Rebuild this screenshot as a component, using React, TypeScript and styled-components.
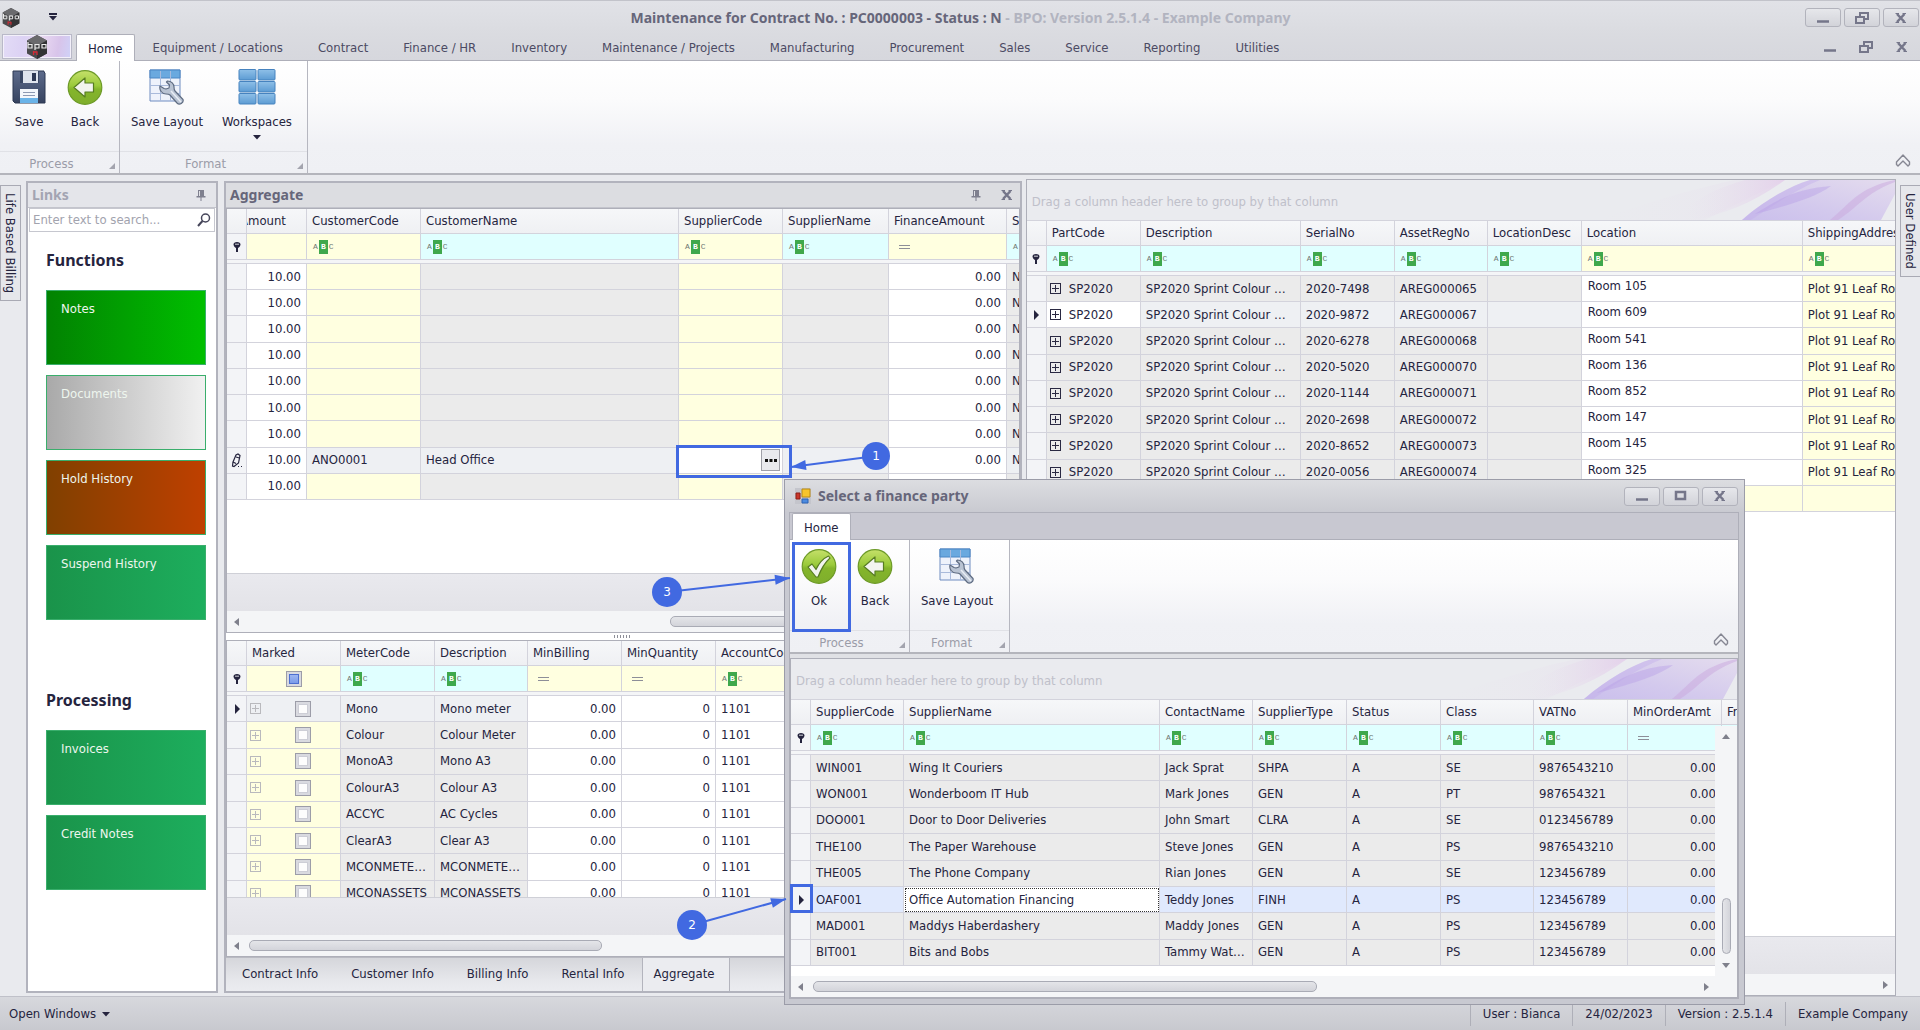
import React from "react";
import styled, { createGlobalStyle, css } from "styled-components";

const INK = "#25243e";
const LINE = "#d3d3dc";
const FRAME = "#aeafb9";
const MARK = "#4169e1";
const HEADING = '"Noto Sans", "DejaVu Sans", sans-serif';

const Global = createGlobalStyle`
  * { box-sizing: border-box; }
  body {
    margin: 0;
    color: ${INK};
    font: 13px/20px "DejaVu Sans Condensed", "DejaVu Sans", "Noto Sans", sans-serif;
  }
  button, input { font: inherit; color: inherit; margin: 0; }
  button { border: 0; padding: 0; background: none; cursor: pointer; }
  svg { display: block; flex: none; }
`;

/* ---------- shell ---------- */

const Page = styled.div`
  position: relative;
  display: flex;
  flex-direction: column;
  min-height: 100vh;
  overflow: hidden;
  background: #e9eaee;
`;

const TitleBar = styled.header`
  display: grid;
  grid-template-columns: 120px 1fr 120px;
  align-items: center;
  height: 34px;
  padding-left: 1px;
  border-top: 1px solid #c2c3ca;
  background: linear-gradient(#e1e2e7, #dadbe0);
`;

const TitleLeft = styled.div`
  display: flex;
  align-items: center;
  gap: 27px;
`;

const TitleText = styled.h1`
  margin: 0;
  font: bold 14px/20px ${HEADING};
  text-align: center;
  color: #66667a;
`;

const Faded = styled.span`
  color: #b2b4c0;
`;

const WindowButtons = styled.div`
  display: flex;
  justify-content: flex-end;
  gap: 3px;
  padding-right: 1px;
`;

const WindowButton = styled.button<{ $flat?: boolean }>`
  display: grid;
  place-items: center;
  width: 36px;
  height: 19px;
  border: 1px solid ${(p) => (p.$flat ? "transparent" : "#b2b3bc")};
  border-radius: 3px;
  background: ${(p) => (p.$flat ? "none" : "linear-gradient(#e6e7eb, #d2d3d9)")};
`;

const MenuRow = styled.nav<{ $inner?: boolean }>`
  display: flex;
  align-items: stretch;
  height: 27px;
  padding-left: 2px;
  border-bottom: 1px solid ${FRAME};
  background: ${(p) => (p.$inner ? "#c8c8d1" : "linear-gradient(#dadbe0, #d6d7dd)")};
`;

const AppButton = styled.button`
  display: grid;
  place-items: center;
  width: 70px;
  height: 25px;
  margin-right: 4px;
  border: 1px solid #b9b9c8;
  box-shadow: inset 0 0 0 1px #f3f0fa;
  background: linear-gradient(100deg, #e3dcf6 0%, #dcd2f4 30%, #e9d9f2 55%, #d8c4ea 80%, #cfd2f8 100%);
`;

const MenuTab = styled.button<{ $active?: boolean }>`
  padding: 2px 17px 0 18px;
  white-space: nowrap;
  color: #4b4a63;
  ${(p) =>
    p.$active &&
    css`
      height: 27px;
      padding: 2px 11px 0;
      color: ${INK};
      background: #fff;
      border: 1px solid ${FRAME};
      border-bottom: 0;
      border-radius: 2px 2px 0 0;
    `}
`;

const MdiButtons = styled.div`
  display: flex;
  align-items: center;
  margin-left: auto;
`;

/* ---------- ribbon ---------- */

const RibbonBar = styled.div`
  display: flex;
  height: 114px;
  border-bottom: 2px solid #b4b5bc;
  background: linear-gradient(#fff, #fbfbfc 35%, #f0f1f5 75%, #eff0f4);
`;

const RibbonGroup = styled.section`
  display: flex;
  flex-direction: column;
  border-right: 1px solid #b6b7c0;
`;

const RibbonItems = styled.div`
  display: flex;
  flex: 1;
  padding: 0 6px 0 1px;
`;

const RibbonButton = styled.button<{ $width: number }>`
  display: flex;
  flex-direction: column;
  align-items: center;
  width: ${(p) => p.$width}px;
  padding-top: 8px;
  white-space: nowrap;
`;

const RibbonLabel = styled.span`
  margin-top: 7px;
`;

const RibbonCaption = styled.div`
  display: flex;
  justify-content: center;
  position: relative;
  height: 22px;
  padding: 2px 16px 0 0;
  border-top: 1px solid #e0e1e6;
  color: #9b9ca8;

  &::after {
    content: "";
    position: absolute;
    right: 4px;
    bottom: 4px;
    border: 3px solid transparent;
    border-right-color: #a3a4ae;
    border-bottom-color: #a3a4ae;
  }
`;

const CollapseButton = styled.button`
  align-self: flex-end;
  margin: 0 9px 6px auto;
`;

/* ---------- workspace ---------- */

const Workspace = styled.main`
  display: grid;
  flex: 1;
  grid-template-columns: 22px 194px minmax(0, 11fr) minmax(0, 12fr) 20px;
  column-gap: 4px;
  padding-top: 4px;
`;

const Rail = styled.aside`
  display: flex;
  align-items: flex-start;
  padding-top: 6px;
`;

const RailTab = styled.button`
  width: 21px;
  padding: 7px 0;
  border: 1px solid #a9aab4;
  background: #e6e7eb;
  writing-mode: vertical-rl;
  white-space: nowrap;
  line-height: 19px;
`;

const Panel = styled.section<{ $narrow?: boolean }>`
  display: flex;
  flex-direction: column;
  margin: 2px ${(p) => (p.$narrow ? "2px" : "0")} 3px 0;
  border: 2px solid #b2b3bd;
  background: #fff;
  min-width: 0;
`;

const PanelTitle = styled.h2<{ $dim?: boolean }>`
  display: flex;
  align-items: center;
  gap: 18px;
  height: 25px;
  margin: 0;
  padding: 0 ${(p) => (p.$dim ? "10px" : "5px")} 0 4px;
  border-bottom: 1px solid #c3c4cc;
  background: ${(p) => (p.$dim ? "#e4e5ea" : "#dcdde1")};
  color: ${(p) => (p.$dim ? "#a3a4b2" : "#66667a")};
  font: bold 14px/20px ${HEADING};
`;

const PanelName = styled.span`
  flex: 1;
`;

const SearchBox = styled.label`
  display: flex;
  align-items: center;
  height: 24px;
  margin: 0 1px;
  padding: 0 3px;
  border: 1px solid #c6c7cf;
`;

const SearchInput = styled.input`
  flex: 1;
  min-width: 0;
  padding: 0;
  border: 0;
  outline: 0;
  background: none;
  &::placeholder { color: #a2a3ae; opacity: 1; }
`;

const LinkGroup = styled.div`
  display: flex;
  flex-direction: column;
  gap: 10px;
  padding: 18px 10px 52px 18px;
`;

const LinkHeading = styled.h3`
  margin: 0 0 10px;
  font: bold 16px/20px ${HEADING};
`;

const GREEN = "linear-gradient(90deg, #1a934a, #1dae5d)";

const Tile = styled.button<{ $fill?: string }>`
  display: flex;
  height: 75px;
  padding: 8px 14px;
  border: 1px solid #3aae6c;
  background: ${(p) => p.$fill || GREEN};
  color: #eef6ee;
`;

/* ---------- data grid ---------- */

const GridBox = styled.div<{ $fixed?: number }>`
  position: relative;
  display: flex;
  flex-direction: column;
  flex: ${(p) => (p.$fixed ? "none" : "1")};
  height: ${(p) => (p.$fixed ? p.$fixed + "px" : "auto")};
  min-width: 0;
  border: 1px solid ${FRAME};
  background: #fff;
`;

const GroupBar = styled.div`
  display: flex;
  justify-content: space-between;
  height: 41px;
  padding-left: 5px;
  overflow: hidden;
  background: #eaebef;
  border-bottom: 1px solid ${LINE};
  color: #bfc0ca;
  line-height: 43px;
  white-space: nowrap;
`;

const TableClip = styled.div`
  flex: 1 1 0;
  min-height: 0;
  overflow: hidden;
`;

const Table = styled.table<{ $height: number }>`
  height: ${(p) => p.$height}px;
  width: 0;
  table-layout: fixed;
  border-collapse: separate;
  border-spacing: 0;
`;

const HeadCell = styled.th<{ $scrolled?: boolean }>`
  height: 25px;
  padding: 0 5px;
  border: solid ${LINE};
  border-width: 0 1px 1px 0;
  background: linear-gradient(#f6f7f9, #eff0f3);
  font-weight: normal;
  text-align: left;
  text-indent: ${(p) => (p.$scrolled ? "-12px" : "0")};
  white-space: nowrap;
  overflow: hidden;
`;

const FilterCell = styled.td<{ $bg: string }>`
  height: 26px;
  padding: 0 5px;
  border: solid ${LINE};
  border-width: 0 1px 1px 0;
  background: ${(p) => p.$bg};
  overflow: hidden;
`;

const GapCell = styled.td`
  height: 4px;
  padding: 0;
  border-bottom: 1px solid ${LINE};
  background: #f4f5f7;
`;

const Cell = styled.td<{ $bg: string; $right?: boolean; $raised?: boolean; $focus?: boolean; $tight?: boolean }>`
  height: 26px;
  padding: ${(p) => (p.$tight ? "0" : "0 5px")};
  border: solid ${LINE};
  border-width: 0 1px 1px 0;
  background: ${(p) => p.$bg};
  text-align: ${(p) => (p.$right ? "right" : "left")};
  white-space: nowrap;
  overflow: hidden;
  text-overflow: ellipsis;
  ${(p) => p.$raised && css`padding: 0 6px 5px;`}
  ${(p) => p.$focus && css`outline: 1px dotted #333; outline-offset: -2px;`}
`;

const Indicator = styled.td`
  padding: 0;
  border: solid ${LINE};
  border-width: 0 1px 1px 0;
  background: #f3f4f7;
  svg { margin: 0 auto; }
`;

const AbcButton = styled.button`
  display: flex;
  align-items: center;
  gap: 1px;
  margin-left: 1px;
  font: 8px/14px "Liberation Mono", monospace;
  color: #6f7773;
`;

const AbcCore = styled.span`
  width: 9px;
  height: 14px;
  background: #3fa84c;
  color: #fff;
  font-weight: bold;
  text-align: center;
`;

const EqualsButton = styled.button`
  display: block;
  width: 11px;
  height: 4px;
  margin-left: 5px;
  border: solid #8d8e98;
  border-width: 1px 0;
`;

const Inline = styled.span`
  display: flex;
  align-items: center;
  gap: 8px;
  padding-left: 3px;
`;

const ExpandButton = styled.button<{ $dim?: boolean }>`
  width: 11px;
  height: 11px;
  border: 1px solid ${(p) => (p.$dim ? "#b9b9bd" : "#2a2942")};
  background:
    linear-gradient(currentColor, currentColor) center / 7px 1px no-repeat,
    linear-gradient(currentColor, currentColor) center / 1px 7px no-repeat;
  color: ${(p) => (p.$dim ? "#b9b9bd" : "#2a2942")};
`;

const MarkedCell = styled.span`
  display: flex;
  align-items: center;
  gap: 34px;
  padding-left: 3px;
`;

const Tick = styled.input<{ $mixed?: boolean }>`
  appearance: none;
  display: block;
  width: 16px;
  height: 16px;
  border: 1px solid #9c9da8;
  background: ${(p) => (p.$mixed ? "linear-gradient(#a9c0f4, #6f92e6)" : "#fdfdfd")};
  box-shadow: inset 0 0 0 2px #d9dae0, inset 0 0 0 3px ${(p) => (p.$mixed ? "#4c6fd0" : "#cdced6")};
`;

const TickCenter = styled.div`
  padding-left: 34px;
`;

const Editor = styled.span`
  display: flex;
  align-items: center;
  height: 24px;
  padding-right: 2px;
`;

const EditorInput = styled.input`
  flex: 1;
  min-width: 0;
  padding: 0 4px;
  border: 0;
  outline: 0;
  background: #fff;
`;

const EditorButton = styled.button`
  display: grid;
  place-items: center;
  width: 19px;
  height: 22px;
  border: 1px solid #9fa0a8;
  background: #e9eaee;
`;

const FooterBand = styled.div`
  height: 38px;
  border-top: 1px solid #cfd0d7;
  background: linear-gradient(#e9e9ee, #e3e3e8);
`;

const ScrollRow = styled.div<{ $corner?: boolean }>`
  display: flex;
  align-items: center;
  height: 21px;
  padding: 0 ${(p) => (p.$corner ? "27px" : "6px")} 0 6px;
  gap: 8px;
  background: #f4f5f7;
`;

const Track = styled.div<{ $start: number; $size: number }>`
  flex: 1;
  padding-left: ${(p) => p.$start}%;
  &::before {
    content: "";
    display: block;
    width: ${(p) => p.$size}%;
    height: 9px;
    border: 1px solid #a9abb5;
    border-radius: 5px;
    background: linear-gradient(#e4e5e9, #d3d4da);
  }
`;

const ScrollColumn = styled.div`
  position: absolute;
  top: 67px;
  right: 0;
  bottom: 21px;
  display: flex;
  flex-direction: column;
  align-items: center;
  width: 22px;
  padding: 7px 0;
  background: #f4f5f7;
`;

const ThumbDown = styled.div`
  width: 9px;
  height: 56px;
  margin: auto 0 7px;
  border: 1px solid #a9abb5;
  border-radius: 5px;
  background: linear-gradient(90deg, #e4e5e9, #d3d4da);
`;

const Splitter = styled.div`
  display: grid;
  place-items: center;
  height: 7px;
  &::before {
    content: "";
    width: 17px;
    height: 3px;
    background: repeating-linear-gradient(90deg, #8d8e98 0 1px, transparent 1px 3px);
  }
`;

const DockTabs = styled.div`
  display: flex;
  align-items: stretch;
  height: 34px;
  border-top: 1px solid #b9bac2;
  background: linear-gradient(#d5d6db, #e7e8ec 70%, #ebecf0);
`;

const DockTab = styled.button<{ $active?: boolean }>`
  padding: 0 17px 2px 16px;
  ${(p) =>
    p.$active &&
    css`
      padding: 0 15px 2px 11px;
      border: solid #b3b4bd;
      border-width: 0 1px;
      background: #ebecf0;
    `}
`;

/* ---------- status bar ---------- */

const StatusBar = styled.footer`
  display: flex;
  align-items: center;
  height: 34px;
  padding-left: 9px;
  border-top: 1px solid #c0c1c9;
  background: linear-gradient(#d7d8dd, #c8c9cf);
`;

const OpenWindows = styled.button`
  display: flex;
  align-items: center;
  gap: 5px;
  margin-right: auto;
`;

const StatusItem = styled.span`
  padding: 2px 12px;
  border-left: 1px solid #aeafb8;
`;

/* ---------- dialog ---------- */

const Dialog = styled.section`
  position: absolute;
  left: 784px;
  top: 479px;
  display: flex;
  flex-direction: column;
  width: 961px;
  padding: 0 5px 5px 4px;
  border: 1px solid #9b9ca8;
  background: #c8c9d1;
`;

const DialogTitle = styled.div`
  display: flex;
  align-items: center;
  gap: 7px;
  height: 32px;
  margin: 0 -5px 0 -4px;
  padding: 0 5px 0 10px;
  background: linear-gradient(#dcdde1, #c9cad1);
`;

const DialogName = styled.h2`
  flex: 1;
  margin: 0;
  font: bold 14px/20px ${HEADING};
  color: #66667a;
`;

const DialogBody = styled.div`
  display: flex;
  flex-direction: column;
  border: 1px solid ${FRAME};
  background: #e0e1e5;
`;

const DialogGrid = styled.div`
  display: flex;
  height: 344px;
  padding-top: 4px;
`;

/* ---------- annotations ---------- */

const Notes = styled.svg`
  position: absolute;
  left: 0;
  top: 0;
  pointer-events: none;
`;

/* ---------- drawings ---------- */

const Logo = ({ size }: { size: number }) => (
  <svg width={size} height={size} viewBox="0 0 24 24">
    <path d="M12 0 22 5.5v13L12 24 2 18.5v-13z" fill="#4a4a4c" />
    <path d="M12 0 22 5.5 12 11 2 5.5z" fill="#6a6a6d" />
    <path d="M12 11v13l10-5.5v-13z" fill="#333335" />
    <path d="M3 7v6h4V9.500H3M10 15V9.500h4V13h-4M17 9.500h4V13h-4z" fill="none" stroke="#ececec" strokeWidth="1.2" />
    <path d="M8.500 16v4M9 17h3v3" fill="none" stroke="#d42a35" strokeWidth="1.3" />
  </svg>
);

const Caret = ({ bar }: { bar?: boolean }) => (
  <svg width="10" height="9" viewBox="0 0 10 9">
    {bar && <path d="M1 0h8v2H1z" fill={INK} />}
    <path d="M1 3h8L5 7.5z" fill={INK} />
  </svg>
);

const ArrowGlyph = ({ dir }: { dir: "left" | "right" | "up" | "down" }) => {
  const d = { left: "M6 0v8L1 4z", right: "M2 0v8l5-4z", up: "M0 6h8L4 1z", down: "M0 2h8L4 7z" }[dir];
  return (
    <svg width="8" height="8" viewBox="0 0 8 8">
      <path d={d} fill="#7f808c" />
    </svg>
  );
};

const WinGlyph = ({ kind }: { kind: "min" | "restore" | "max" | "close" }) => (
  <svg width="16" height="14" viewBox="0 0 16 14" fill="none" stroke="#75768a" strokeWidth="2">
    {kind === "min" && <path d="M2 10.5h12" strokeWidth="2.5" />}
    {kind === "restore" && (
      <>
        <path d="M6 5V2h8v6h-3" />
        <path d="M2 6h8v6H2z" />
      </>
    )}
    {kind === "max" && <path d="M3 3h9v7H3z" strokeWidth="2.5" />}
    {kind === "close" && (
      <>
        <path d="M4 3l7.500 8M11.500 3 4 11" strokeWidth="2.5" />
        <path d="M2.500 2.500h3.500M9.500 2.500H13M2.500 11.500h3.500M9.500 11.500H13" strokeWidth="1" />
      </>
    )}
  </svg>
);

const PinGlyph = () => (
  <svg width="10" height="12" viewBox="0 0 10 12">
    <path d="M2 1h6v6h1.500v1.500h-4V12h-1V8.500H.5V7H2z" fill="#7f808f" />
    <path d="M3.500 2v5" stroke="#e0e1e6" />
  </svg>
);

const CollapseGlyph = () => (
  <svg width="16" height="13" viewBox="0 0 16 13" fill="none" stroke="#868793" strokeWidth="1.4">
    <path d="M8 1 1.500 8v2.500L3 12l5-5 5 5 1.500-1.500V8z" strokeLinejoin="round" />
  </svg>
);

const FilterPin = () => (
  <svg width="10" height="12" viewBox="0 0 10 12">
    <path d="M5 1c2.200 0 3.500 1 3.500 2.500S7 6.500 6 7v4H4V7C3 6.500 1.500 5 1.500 3.500S2.800 1 5 1z" fill={INK} />
    <path d="M3 3.200h4" stroke="#fff" strokeWidth=".8" />
  </svg>
);

const RowMarker = () => (
  <svg width="6" height="10" viewBox="0 0 6 10">
    <path d="M1 0v10l5-5z" fill={INK} />
  </svg>
);

const PencilGlyph = () => (
  <svg width="12" height="15" viewBox="0 0 12 15" fill="none" stroke={INK} strokeWidth="1.2">
    <path d="M2 9 5 2l2-1 2 1.500L7.500 10 3 13.500l-1.500-.5z" />
    <path d="M5 4l3.500 1M2 9l3 1.500" />
    <path d="M7 13.500h1M10 13.500h1" />
  </svg>
);

const SearchGlyph = () => (
  <svg width="14" height="14" viewBox="0 0 14 14" fill="none" stroke="#46465a" strokeWidth="1.5">
    <circle cx="8.5" cy="5" r="4" />
    <path d="M5.500 8 1 13" strokeWidth="2" />
  </svg>
);

const DotsGlyph = () => (
  <svg width="12" height="3" viewBox="0 0 12 3" fill="#111">
    <path d="M0 0h3v3H0zM4.500 0h3v3h-3zM9 0h3v3H9z" />
  </svg>
);

const SaveIcon = () => (
  <svg width="36" height="36" viewBox="0 0 36 36">
    <defs>
      <linearGradient id="floppy" x2="0" y2="1">
        <stop offset="0" stopColor="#5d6b8c" />
        <stop offset="1" stopColor="#36435f" />
      </linearGradient>
    </defs>
    <path d="M2 2h31v1l1 1v30H4l-2-2z" fill="url(#floppy)" stroke="#2d3853" />
    <path d="M9 2h19v12H9z" fill="#3a4764" />
    <path d="M12 2h15v12H12z" fill="#dfe4ed" />
    <path d="M21 4h4v8h-4z" fill="#2d3853" />
    <path d="M9 20h18v14H9z" fill="#f3f6fb" />
    <path d="M9 29h18v5H9z" fill="#6ab3e8" />
    <path d="M12 23.500h12M12 26.500h12" stroke="#8d99b3" />
  </svg>
);

const RoundIcon = ({ kind }: { kind: "back" | "ok" }) => (
  <svg width="36" height="36" viewBox="0 0 36 36">
    <defs>
      <linearGradient id={"disc-" + kind} x2="0" y2="1">
        <stop offset="0" stopColor="#c5e06a" />
        <stop offset=".45" stopColor="#9aca3a" />
        <stop offset=".55" stopColor="#84b52b" />
        <stop offset="1" stopColor="#7fae2c" />
      </linearGradient>
    </defs>
    <circle cx="18" cy="18.5" r="16.8" fill={`url(#disc-${kind})`} stroke="#6d9a28" strokeWidth="1.2" />
    <path
      d={kind === "back" ? "M7 18.500 18 9v5h8.500v9H18v5z" : "M7 19l4-3 4 5.500C18 15 22 10.500 27.500 8l1.500 2c-5 4.500-8.500 10-12 19h-2z"}
      fill="#f2f4ee"
      stroke="#577c22"
      strokeWidth="1.2"
      strokeLinejoin="round"
    />
  </svg>
);

const LayoutIcon = () => (
  <svg width="38" height="36" viewBox="0 0 38 36">
    <path d="M2 1h30v31H2z" fill="#eef2fb" stroke="#6f8cc0" />
    <path d="M2 1h30v8H2z" fill="#6aa9df" stroke="#4a86c4" />
    <path d="M2 16.500h30M2 24.500h30M12.500 2v30M22.500 2v30" stroke="#a9badb" fill="none" />
    <path
      d="M12 17c-1 4 2 8 6 8 2 0 3 0 4 1l7 8c2.500 2.500 7 0 6-3.500L27 22c-1-1-1-2-1-4 0-3-2.500-6-6.500-6l-1 1 3 3-.5 3-3 1-2-.5z"
      fill="#b9c3d3"
      stroke="#5f6c82"
      strokeWidth="1.2"
      strokeLinejoin="round"
    />
    <path d="M23 22 33 33" stroke="#e8edf4" strokeWidth="1.5" />
  </svg>
);

const WorkspacesIcon = () => (
  <svg width="38" height="36" viewBox="0 0 38 36">
    <defs>
      <linearGradient id="pane" x2="0" y2="1">
        <stop offset="0" stopColor="#8fc0e8" />
        <stop offset="1" stopColor="#5c9bd3" />
      </linearGradient>
    </defs>
    {[0, 12, 24].map((y) =>
      [1, 20].map((x) => (
        <rect key={x + "-" + y} x={x} y={y + 0.5} width="17" height="10.5" rx="1" fill="url(#pane)" stroke="#4683bf" />
      ))
    )}
  </svg>
);

const FormIcon = () => (
  <svg width="16" height="16" viewBox="0 0 16 16">
    <path d="M0 0h16v16H0z" fill="#c4c5cc" />
    <path d="M7 1h8v8H7z" fill="#f7c42c" stroke="#b98a14" />
    <path d="M1 5h4v6H1z" fill="#c9372b" stroke="#8e1f17" />
    <path d="M7 11h6v4H7z" fill="#4d8be0" stroke="#2d62b4" />
  </svg>
);

const Ribbons = ({ id }: { id: string }) => (
  <svg width="300" height="40" viewBox="0 0 300 40">
    <defs>
      <linearGradient id={id + "a"}>
        <stop offset="0" stopColor="#e9e4ee" stopOpacity="0" />
        <stop offset="1" stopColor="#e3cdea" />
      </linearGradient>
      <linearGradient id={id + "b"} y1="1" x2="1" y2="0">
        <stop offset="0" stopColor="#cabfec" />
        <stop offset=".4" stopColor="#d3c9ed" />
        <stop offset="1" stopColor="#e4dcee" />
      </linearGradient>
    </defs>
    <path d="M0 40C60 20 110 6 140 0h50L110 40z" fill={`url(#${id}a)`} opacity=".25" />
    <path d="M90 30C110 12 130 6 150 0h40C160 22 130 34 100 40z" fill={`url(#${id}a)`} opacity=".8" />
    <path d="M147 40C170 20 195 6 215 0h85v14L286 40z" fill={`url(#${id}b)`} />
    <path d="M147 40C170 20 195 6 215 0h10C200 10 180 24 156 40z" fill="#c3b0ea" opacity=".45" />
    <path d="M160 34C190 14 210 8 236 6 220 18 190 26 160 34z" fill="#b9a0e6" opacity=".45" />
    <path d="M235 40C255 24 262 8 300 0v2C272 12 262 28 243 40z" fill="#c9a8dd" opacity=".5" />
  </svg>
);

/* ---------- grid component ---------- */

const GREY = "#ebebeb";
const YELLOW = "#ffffe0";
const CYAN = "#e0ffff";
const WHITE = "#ffffff";
const ROW_FOCUS = "#eef0f3";
const ROW_SELECTED = "#e0e9fd";

type FilterKind = "abc" | "eq" | "check" | "none";

interface Column {
  title: string;
  width: number;
  filter: FilterKind;
  filterBg: string;
  bg: string;
  right?: boolean;
  raised?: boolean;
}

interface GridProps {
  label: string;
  columns: Column[];
  rows: React.ReactNode[][];
  height: number;
  scrolled?: boolean;
  marks?: Record<number, "current" | "edit">;
  cellBg?: (row: number, col: number) => string | undefined;
  focusCell?: [number, number];
}

const Abc = () => (
  <AbcButton aria-label="Contains filter">
    <span>A</span>
    <AbcCore>B</AbcCore>
    <span>C</span>
  </AbcButton>
);

function FilterControl({ kind }: { kind: FilterKind }) {
  if (kind === "abc") return <Abc />;
  if (kind === "eq") return <EqualsButton aria-label="Equals filter" />;
  if (kind === "check")
    return (
      <TickCenter>
        <Tick type="checkbox" $mixed aria-label="Marked filter" />
      </TickCenter>
    );
  return null;
}

function DataTable({ label, columns, rows, height, scrolled, marks = {}, cellBg, focusCell }: GridProps) {
  return (
    <TableClip>
      <Table $height={height} aria-label={label}>
        <colgroup>
          <col width={20} />
          {columns.map((c) => (
            <col key={c.title} width={c.width} />
          ))}
        </colgroup>
        <thead>
          <tr>
            <HeadCell />
            {columns.map((c, i) => (
              <HeadCell key={c.title} $scrolled={scrolled && i === 0}>
                {c.title}
              </HeadCell>
            ))}
          </tr>
          <tr>
            <Indicator>
              <FilterPin />
            </Indicator>
            {columns.map((c) => (
              <FilterCell key={c.title} $bg={c.filterBg}>
                <FilterControl kind={c.filter} />
              </FilterCell>
            ))}
          </tr>
          <tr>
            <GapCell colSpan={columns.length + 1} />
          </tr>
        </thead>
        <tbody>
          {rows.map((row, r) => (
            <tr key={r}>
              <Indicator>
                {marks[r] === "current" && <RowMarker />}
                {marks[r] === "edit" && <PencilGlyph />}
              </Indicator>
              {columns.map((c, i) => (
                <Cell
                  key={c.title}
                  $bg={cellBg?.(r, i) ?? c.bg}
                  $right={c.right}
                  $raised={c.raised}
                  $tight={typeof row[i] === "object"}
                  $focus={!!focusCell && focusCell[0] === r && focusCell[1] === i}
                >
                  {row[i]}
                </Cell>
              ))}
            </tr>
          ))}
        </tbody>
      </Table>
    </TableClip>
  );
}

function HScroll({ start, size, corner }: { start: number; size: number; corner?: boolean }) {
  return (
    <ScrollRow $corner={corner}>
      <ArrowGlyph dir="left" />
      <Track $start={start} $size={size} />
      <ArrowGlyph dir="right" />
    </ScrollRow>
  );
}

/* ---------- data ---------- */

const col = (
  title: string,
  width: number,
  bg = GREY,
  filterBg = CYAN,
  filter: FilterKind = "abc",
  right = false,
  raised = false
): Column => ({ title, width, bg, filterBg, filter, right, raised });

const aggregateColumns = [
  col("Amount", 60, WHITE, YELLOW, "none", true),
  col("CustomerCode", 114, YELLOW, YELLOW),
  col("CustomerName", 258),
  col("SupplierCode", 104, YELLOW, YELLOW),
  col("SupplierName", 106),
  col("FinanceAmount", 118, WHITE, YELLOW, "eq", true),
  col("Status", 60),
];

const supplierEditor = (
  <Editor>
    <EditorInput aria-label="Supplier code" />
    <EditorButton aria-label="Choose supplier">
      <DotsGlyph />
    </EditorButton>
  </Editor>
);

const aggregateRows: React.ReactNode[][] = Array.from({ length: 9 }, (_, i) =>
  i === 7
    ? ["10.00", "ANO0001", "Head Office", supplierEditor, "", "0.00", "N"]
    : ["10.00", "", "", "", "", "0.00", "N"]
);

const meterColumns = [
  col("Marked", 94, YELLOW, YELLOW, "check"),
  col("MeterCode", 94),
  col("Description", 93),
  col("MinBilling", 94, WHITE, YELLOW, "eq", true),
  col("MinQuantity", 94, WHITE, YELLOW, "eq", true),
  col("AccountCode", 94, WHITE, YELLOW),
];

const meterRows = [
  ["Mono", "Mono meter"],
  ["Colour", "Colour Meter"],
  ["MonoA3", "Mono A3"],
  ["ColourA3", "Colour A3"],
  ["ACCYC", "AC Cycles"],
  ["ClearA3", "Clear A3"],
  ["MCONMETERS", "MCONMETERS"],
  ["MCONASSETS", "MCONASSETS"],
].map(([code, name]) => [
  <MarkedCell key="m">
    <ExpandButton $dim aria-label={"Expand " + code} />
    <Tick type="checkbox" aria-label={"Mark " + code} />
  </MarkedCell>,
  code,
  name,
  "0.00",
  "0",
  "1101",
]);

const partColumns = [
  col("PartCode", 94),
  col("Description", 160),
  col("SerialNo", 94),
  col("AssetRegNo", 93),
  col("LocationDesc", 94),
  col("Location", 221, WHITE, YELLOW, "abc", false, true),
  col("ShippingAddress", 160, YELLOW, YELLOW),
];

const partRows: React.ReactNode[][] = [
  ["2020-7498", "AREG000065", "Room 105"],
  ["2020-9872", "AREG000067", "Room 609"],
  ["2020-6278", "AREG000068", "Room 541"],
  ["2020-5020", "AREG000070", "Room 136"],
  ["2020-1144", "AREG000071", "Room 852"],
  ["2020-2698", "AREG000072", "Room 147"],
  ["2020-8652", "AREG000073", "Room 145"],
  ["2020-0056", "AREG000074", "Room 325"],
].map(([serial, reg, room]) => [
  <Inline key="p">
    <ExpandButton aria-label={"Expand " + serial} />
    SP2020
  </Inline>,
  "SP2020 Sprint Colour MFP",
  serial,
  reg,
  "",
  room,
  "Plot 91 Leaf Road",
]);
partRows.push(["", "", "", "", "", "", ""]);

const supplierColumns = [
  col("SupplierCode", 93),
  col("SupplierName", 256),
  col("ContactName", 93),
  col("SupplierType", 94),
  col("Status", 94),
  col("Class", 93),
  col("VATNo", 94),
  col("MinOrderAmt", 94, GREY, CYAN, "eq", true),
  col("Freight", 60),
];

const supplierRows = [
  ["WIN001", "Wing It Couriers", "Jack Sprat", "SHPA", "A", "SE", "9876543210", "0.00", ""],
  ["WON001", "Wonderboom IT Hub", "Mark Jones", "GEN", "A", "PT", "987654321", "0.00", ""],
  ["DOO001", "Door to Door Deliveries", "John Smart", "CLRA", "A", "SE", "0123456789", "0.00", ""],
  ["THE100", "The Paper Warehouse", "Steve Jones", "GEN", "A", "PS", "9876543210", "0.00", ""],
  ["THE005", "The Phone Company", "Rian Jones", "GEN", "A", "SE", "123456789", "0.00", ""],
  ["OAF001", "Office Automation Financing", "Teddy Jones", "FINH", "A", "PS", "123456789", "0.00", ""],
  ["MAD001", "Maddys Haberdashery", "Maddy Jones", "GEN", "A", "PS", "123456789", "0.00", ""],
  ["BIT001", "Bits and Bobs", "Tammy Watson", "GEN", "A", "PS", "123456789", "0.00", ""],
];

const menus = [
  "Equipment / Locations",
  "Contract",
  "Finance / HR",
  "Inventory",
  "Maintenance / Projects",
  "Manufacturing",
  "Procurement",
  "Sales",
  "Service",
  "Reporting",
  "Utilities",
];

const callouts = [
  { n: 1, x: 876, y: 456, r: 14, tip: [791, 467], angle: 172.6 },
  { n: 3, x: 667, y: 592, r: 15, tip: [790, 578], angle: -6.5 },
  { n: 2, x: 692, y: 925, r: 15, tip: [786, 899], angle: -15.5 },
];

/* ---------- composition ---------- */

const SaveLayoutButton = () => (
  <RibbonButton $width={92}>
    <LayoutIcon />
    <RibbonLabel>Save Layout</RibbonLabel>
  </RibbonButton>
);

const BackButton = () => (
  <RibbonButton $width={56}>
    <RoundIcon kind="back" />
    <RibbonLabel>Back</RibbonLabel>
  </RibbonButton>
);

function FinanceDialog() {
  return (
    <Dialog role="dialog" aria-label="Select a finance party">
      <DialogTitle>
        <FormIcon />
        <DialogName>Select a finance party</DialogName>
        <WindowButtons>
          <WindowButton aria-label="Minimize"><WinGlyph kind="min" /></WindowButton>
          <WindowButton aria-label="Maximize"><WinGlyph kind="max" /></WindowButton>
          <WindowButton aria-label="Close"><WinGlyph kind="close" /></WindowButton>
        </WindowButtons>
      </DialogTitle>
      <DialogBody>
        <MenuRow $inner>
          <MenuTab $active>Home</MenuTab>
        </MenuRow>
        <RibbonBar>
          <RibbonGroup>
            <RibbonItems>
              <RibbonButton $width={56}>
                <RoundIcon kind="ok" />
                <RibbonLabel>Ok</RibbonLabel>
              </RibbonButton>
              <BackButton />
            </RibbonItems>
            <RibbonCaption>Process</RibbonCaption>
          </RibbonGroup>
          <RibbonGroup>
            <RibbonItems>
              <SaveLayoutButton />
            </RibbonItems>
            <RibbonCaption>Format</RibbonCaption>
          </RibbonGroup>
          <CollapseButton aria-label="Collapse ribbon"><CollapseGlyph /></CollapseButton>
        </RibbonBar>
        <DialogGrid>
          <GridBox>
            <GroupBar>
              Drag a column header here to group by that column
              <Ribbons id="dlg" />
            </GroupBar>
            <DataTable
              label="Finance parties"
              columns={supplierColumns}
              rows={supplierRows}
              height={266}
              marks={{ 5: "current" }}
              focusCell={[5, 1]}
              cellBg={(r, c) => (r === 5 ? (c === 1 ? WHITE : ROW_SELECTED) : undefined)}
            />
            <HScroll start={0} size={57} corner />
            <ScrollColumn>
              <ArrowGlyph dir="up" />
              <ThumbDown />
              <ArrowGlyph dir="down" />
            </ScrollColumn>
          </GridBox>
        </DialogGrid>
      </DialogBody>
    </Dialog>
  );
}

export default function App() {
  return (
    <Page>
      <Global />
      <TitleBar>
        <TitleLeft>
          <Logo size={20} />
          <Caret bar />
        </TitleLeft>
        <TitleText>
          Maintenance for Contract No. : PC0000003 - Status : N
          <Faded> - BPO: Version 2.5.1.4 - Example Company</Faded>
        </TitleText>
        <WindowButtons>
          <WindowButton aria-label="Minimize"><WinGlyph kind="min" /></WindowButton>
          <WindowButton aria-label="Restore"><WinGlyph kind="restore" /></WindowButton>
          <WindowButton aria-label="Close"><WinGlyph kind="close" /></WindowButton>
        </WindowButtons>
      </TitleBar>
      <MenuRow>
        <AppButton aria-label="Application menu"><Logo size={24} /></AppButton>
        <MenuTab $active>Home</MenuTab>
        {menus.map((m) => (
          <MenuTab key={m}>{m}</MenuTab>
        ))}
        <MdiButtons>
          <WindowButton $flat aria-label="Minimize document"><WinGlyph kind="min" /></WindowButton>
          <WindowButton $flat aria-label="Restore document"><WinGlyph kind="restore" /></WindowButton>
          <WindowButton $flat aria-label="Close document"><WinGlyph kind="close" /></WindowButton>
        </MdiButtons>
      </MenuRow>
      <RibbonBar>
        <RibbonGroup>
          <RibbonItems>
            <RibbonButton $width={56}>
              <SaveIcon />
              <RibbonLabel>Save</RibbonLabel>
            </RibbonButton>
            <BackButton />
          </RibbonItems>
          <RibbonCaption>Process</RibbonCaption>
        </RibbonGroup>
        <RibbonGroup>
          <RibbonItems>
            <SaveLayoutButton />
            <RibbonButton $width={88}>
              <WorkspacesIcon />
              <RibbonLabel>Workspaces</RibbonLabel>
              <Caret />
            </RibbonButton>
          </RibbonItems>
          <RibbonCaption>Format</RibbonCaption>
        </RibbonGroup>
        <CollapseButton aria-label="Collapse ribbon"><CollapseGlyph /></CollapseButton>
      </RibbonBar>

      <Workspace>
        <Rail>
          <RailTab>Life Based Billing</RailTab>
        </Rail>

        <Panel $narrow>
          <PanelTitle $dim>
            <PanelName>Links</PanelName>
            <PinGlyph />
          </PanelTitle>
          <SearchBox>
            <SearchInput placeholder="Enter text to search..." aria-label="Search links" />
            <SearchGlyph />
          </SearchBox>
          <LinkGroup>
            <LinkHeading>Functions</LinkHeading>
            <Tile $fill="linear-gradient(90deg, #028202, #00bf00)">Notes</Tile>
            <Tile $fill="linear-gradient(90deg, #a9a9a9, #f1f1f1)">Documents</Tile>
            <Tile $fill="linear-gradient(90deg, #804000, #bf4000)">Hold History</Tile>
            <Tile>Suspend History</Tile>
          </LinkGroup>
          <LinkGroup>
            <LinkHeading>Processing</LinkHeading>
            <Tile>Invoices</Tile>
            <Tile>Credit Notes</Tile>
          </LinkGroup>
        </Panel>

        <Panel>
          <PanelTitle>
            <PanelName>Aggregate</PanelName>
            <PinGlyph />
            <WinGlyph kind="close" />
          </PanelTitle>
          <GridBox>
            <DataTable
              label="Aggregate"
              columns={aggregateColumns}
              rows={aggregateRows}
              height={291}
              scrolled
              marks={{ 7: "edit" }}
              cellBg={(r, c) => (r === 7 ? (c === 0 || c === 3 || c === 5 ? WHITE : ROW_FOCUS) : undefined)}
            />
            <FooterBand />
            <HScroll start={54} size={98} />
          </GridBox>
          <Splitter />
          <GridBox $fixed={317}>
            <DataTable
              label="Meters"
              columns={meterColumns}
              rows={meterRows}
              height={266}
              marks={{ 0: "current" }}
              cellBg={(r, c) => (r === 0 && c < 3 ? ROW_FOCUS : undefined)}
            />
            <FooterBand />
            <HScroll start={0} size={47} />
          </GridBox>
          <DockTabs>
            <DockTab>Contract Info</DockTab>
            <DockTab>Customer Info</DockTab>
            <DockTab>Billing Info</DockTab>
            <DockTab>Rental Info</DockTab>
            <DockTab $active>Aggregate</DockTab>
          </DockTabs>
        </Panel>

        <GridBox>
          <GroupBar>
            Drag a column header here to group by that column
            <Ribbons id="main" />
          </GroupBar>
          <DataTable
            label="Contract items"
            columns={partColumns}
            rows={partRows}
            height={291}
            marks={{ 1: "current" }}
            cellBg={(r, c) => {
              if (r === 8) return YELLOW;
              if (r === 1 && c === 0) return WHITE;
              return r === 1 && c < 5 ? ROW_FOCUS : undefined;
            }}
          />
          <FooterBand />
          <HScroll start={0} size={60} />
        </GridBox>

        <Rail>
          <RailTab>User Defined</RailTab>
        </Rail>
      </Workspace>

      <StatusBar>
        <OpenWindows>
          Open Windows <Caret />
        </OpenWindows>
        <StatusItem>User : Bianca</StatusItem>
        <StatusItem>24/02/2023</StatusItem>
        <StatusItem>Version : 2.5.1.4</StatusItem>
        <StatusItem>Example Company</StatusItem>
      </StatusBar>

      <FinanceDialog />

      <Notes width="1920" height="1030" viewBox="0 0 1920 1030">
        <g fill="none" stroke={MARK} strokeWidth="3">
          <path d="M677.500 446.500h113v30h-113z" />
          <path d="M793.500 543.500h56v87h-56z" />
          <path d="M791.500 885.500h20v26h-20z" />
        </g>
        {callouts.map((c) => (
          <g key={c.n}>
            <path d={`M${c.x} ${c.y}L${c.tip[0]} ${c.tip[1]}`} stroke={MARK} strokeWidth="2" />
            <path
              d="M0 0-15-5v10z"
              fill={MARK}
              transform={`translate(${c.tip[0]} ${c.tip[1]}) rotate(${c.angle})`}
            />
            <circle cx={c.x} cy={c.y} r={c.r} fill={MARK} />
            <text x={c.x} y={c.y + 4} textAnchor="middle" fontSize="12" fontFamily="DejaVu Sans" fill="#fff">
              {c.n}
            </text>
          </g>
        ))}
      </Notes>
    </Page>
  );
}
